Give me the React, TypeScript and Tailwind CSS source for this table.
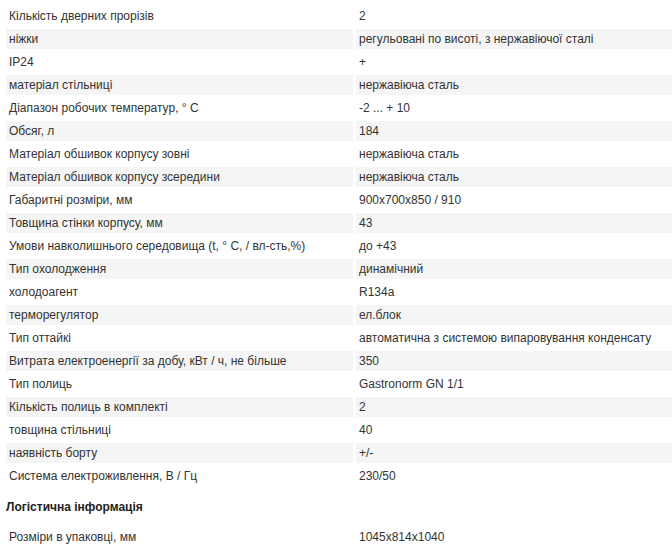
import React from 'react';

const SPECS: [string, string][] = [
  ['Кількість дверних прорізів', '2'],
  ['ніжки', 'регульовані по висоті, з нержавіючої сталі'],
  ['IP24', '+'],
  ['матеріал стільниці', 'нержавіюча сталь'],
  ['Діапазон робочих температур, ° C', '-2 ... + 10'],
  ['Обсяг, л', '184'],
  ['Матеріал обшивок корпусу зовні', 'нержавіюча сталь'],
  ['Матеріал обшивок корпусу зсередини', 'нержавіюча сталь'],
  ['Габаритні розміри, мм', '900х700х850 / 910'],
  ['Товщина стінки корпусу, мм', '43'],
  ['Умови навколишнього середовища (t, ° C, / вл-сть,%)', 'до +43'],
  ['Тип охолодження', 'динамічний'],
  ['холодоагент', 'R134a'],
  ['терморегулятор', 'ел.блок'],
  ['Тип оттайкі', 'автоматична з системою випаровування конденсату'],
  ['Витрата електроенергії за добу, кВт / ч, не більше', '350'],
  ['Тип полиць', 'Gastronorm GN 1/1'],
  ['Кількість полиць в комплекті', '2'],
  ['товщина стільниці', '40'],
  ['наявність борту', '+/-'],
  ['Система електроживлення, В / Гц', '230/50'],
];

const LOGISTICS: [string, string][] = [['Розміри в упаковці, мм', '1045х814х1040']];

function SpecTable({ rows }: { rows: [string, string][] }) {
  return (
    <table className="w-[672px] table-fixed border-separate border-spacing-[3px]">
      <tbody>
        {rows.map(([name, value], i) => (
          <tr key={name} className={i % 2 === 1 ? 'bg-[#f5f5f5]' : ''}>
            <td className="w-[347px] h-[20px] p-0 px-[3px] leading-[20px] align-middle whitespace-nowrap">{name}</td>
            <td className="h-[20px] p-0 px-[3px] leading-[20px] align-middle whitespace-nowrap">{value}</td>
          </tr>
        ))}
      </tbody>
    </table>
  );
}

export default function App() {
  return (
    <div
      className="w-[672px] h-[552px] overflow-hidden bg-white pt-[3px] pl-[3px] text-[12px] text-[#333]"
      style={{ fontFamily: '"Liberation Sans", Arial, sans-serif' }}
    >
      <SpecTable rows={SPECS} />
      <div className="mt-[8px] mb-[7px] h-[20px] pl-[3px] leading-[20px] font-bold text-[#222]">
        Логістична інформація
      </div>
      <SpecTable rows={LOGISTICS} />
    </div>
  );
}
